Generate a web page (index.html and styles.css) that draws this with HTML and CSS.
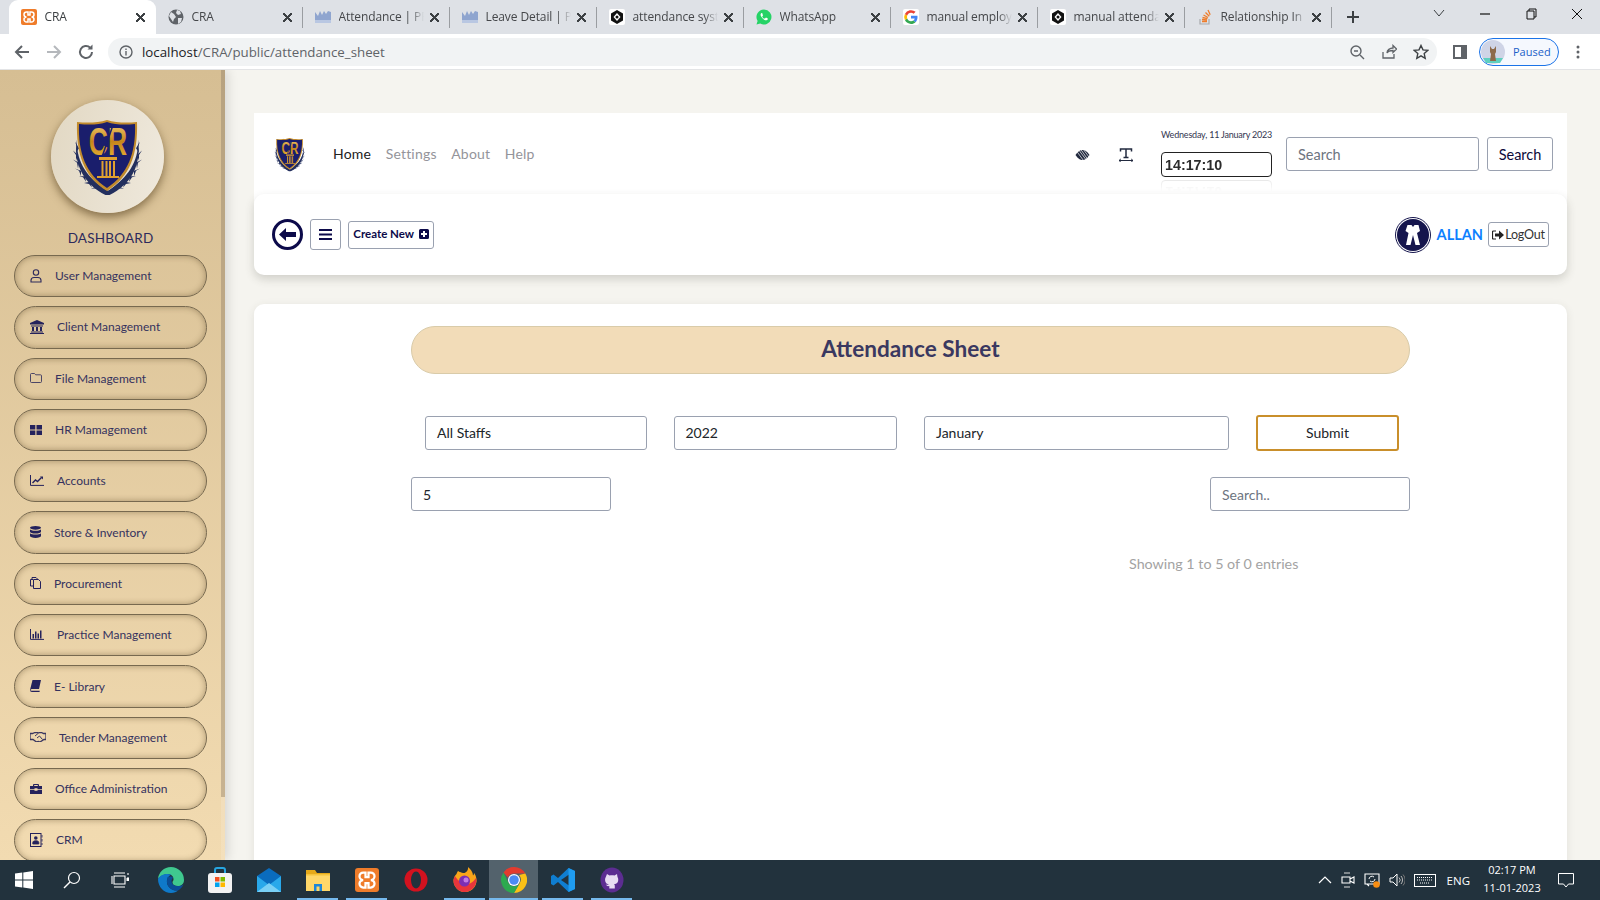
FILE: index.html
```html
<!DOCTYPE html>
<html lang="en">
<head>
<meta charset="utf-8">
<title>CRA</title>
<link rel="stylesheet" href="styles.css">
</head>
<body>
<svg class="defs" width="0" height="0" aria-hidden="true">
  <defs>
    <linearGradient id="gold" x1="0" y1="0" x2="0" y2="1"><stop offset="0" stop-color="#f8d77a"/><stop offset=".5" stop-color="#c5861b"/><stop offset="1" stop-color="#efb83c"/></linearGradient>
    <symbol id="crest" viewBox="0 0 72 76">
      <g fill="#232f5e" transform="translate(0 -1) scale(1 1.120)">
        <path d="M3 21l2 5-1 5 3-4zM1 29l3 4 0 5 2-5zM1 37l4 3 1 5 1-5zM3 45l4 2 2 5 0-5zM7 52l4 1 3 4-1-5zM12 58l5 1 3 3-2-5zM19 63l6 0 4 3-3-5zM2 24l3 5M2 32l3 5"/>
        <path d="M68 21l-2 5 1 5-3-4zM70 29l-3 4 0 5-2-5zM70 37l-4 3-1 5-1-5zM68 45l-4 2-2 5 0-5zM64 52l-4 1-3 4 1-5zM59 58l-5 1-3 3 2-5zM52 63l-6 0-4 3 3-5z"/>
        <path d="M5 19c-4 18 4 39 29 50h3C63 58 69 38 66 19c1 18-8 33-30 46C14 53 4 38 5 19z"/>
      </g>
      <path d="M5 3c9 1 21 1 30-2 9 3 21 3 30 2 1 32-7 55-30 69C12 58 4 35 5 3z" fill="#c18a2c"/>
      <path d="M7 5c9 1 20 1 28-2 8 3 19 3 28 2 1 29-7 50-28 64C14 55 6 34 7 5z" fill="#1a1e6c"/>
      <text class="crest-text" transform="translate(36 36) scale(.68 1)" text-anchor="middle" fill="url(#gold)">CR</text>
      <path d="M41 6L30 38" stroke="#1a1e6c" stroke-width="1.500"/>
      <path d="M27 38h18v3H27zM29.500 42h2v15h-2zM33.500 42h2v15h-2zM37 42h2v15h-2zM41 42h2v15h-2zM25 57h22v2H25z" fill="#e0a02f"/>
    </symbol>
    <symbol id="fav-xampp" viewBox="0 0 16 16"><rect width="16" height="16" rx="2" fill="#ef7c2a"/><path d="M5.500 3H7v3h2V3h1.500a2.500 2.500 0 0 1 0 5 2.500 2.500 0 0 1 0 5H9v-3H7v3H5.500a2.500 2.500 0 0 1 0-5 2.500 2.500 0 0 1 0-5z" fill="none" stroke="#fff" stroke-width="1.500"/></symbol>
    <symbol id="fav-globe" viewBox="0 0 16 16"><circle cx="8" cy="8" r="7.500" fill="#5f6368"/><path d="M3 3l3 2 2 3-2 2-1 3-2-3-2-3zM9 1l3 1 1 3-3 1-2-2zM10 9l4 0-1 4-3 2z" fill="#dee1e6"/></symbol>
    <symbol id="fav-chart" viewBox="0 0 16 16"><path d="M0 13V3l3 4 2-5 2 4 2-4 2 3 2-3 3 1v10z" fill="#8fa5cf"/><path d="M0 11h16v3H0z" fill="#b9c7e2"/></symbol>
    <symbol id="fav-hex" viewBox="0 0 16 16"><rect width="16" height="16" rx="2" fill="#fff"/><path d="M8 1l6 3.500v7L8 15l-6-3.500v-7z" fill="#111"/><path d="M8 4l3.500 4L8 12 4.500 8z" fill="#fff"/><circle cx="8" cy="8" r="1.500" fill="#111"/></symbol>
    <symbol id="fav-wa" viewBox="0 0 16 16"><path d="M8 .5a7.500 7.500 0 0 0-6.400 11.400L.5 15.500l3.700-1A7.500 7.500 0 1 0 8 .5z" fill="#25d366"/><path d="M5.500 4c-1 .5-1.500 2 0 4s3.500 3.500 5 3.300c1-.2 1.500-1 1.300-1.800l-1.800-1-1 .9C8 10 6.500 8.500 6.200 7.400l.8-1L6.200 4z" fill="#fff"/></symbol>
    <symbol id="fav-google" viewBox="0 0 16 16"><rect width="16" height="16" rx="2" fill="#fff"/><path d="M14.500 8.200c0-.5 0-1-.1-1.400H8v2.700h3.700a3 3 0 0 1-1.400 2l2.200 1.700c1.300-1.200 2-3 2-5z" fill="#4285f4"/><path d="M8 15c1.900 0 3.400-.6 4.500-1.800l-2.200-1.700c-.6.400-1.400.7-2.300.7-1.800 0-3.300-1.200-3.800-2.800L1.900 11.100A7 7 0 0 0 8 15z" fill="#34a853"/><path d="M4.200 9.400a4.200 4.200 0 0 1 0-2.800L1.900 4.900a7 7 0 0 0 0 6.200z" fill="#fbbc05"/><path d="M8 3.800c1 0 1.900.3 2.600 1l2-2A7 7 0 0 0 1.900 4.900l2.300 1.700C4.700 5 6.200 3.800 8 3.800z" fill="#ea4335"/></symbol>
    <symbol id="fav-so" viewBox="0 0 16 16"><path d="M3 10v5h9v-5" fill="none" stroke="#a7a9ac" stroke-width="1.200"/><path d="M5 12.500h5M5 10.500l5 .5M5.500 8.500l5 1.200M6.500 6l4.500 2.500M8.500 3.500l3.800 3.800M11 1l2.200 4.800" stroke="#ef7c2a" stroke-width="1.300" fill="none"/></symbol>
  </defs>
</svg>

<div class="app">
  <header class="chrome">
    <div class="tabstrip">
      <div class="tab tab-active"><svg class="fav"><use href="#fav-xampp"/></svg><span class="tab-title">CRA</span><span class="tab-x"></span></div>
      <div class="tab tab-nosep"><svg class="fav"><use href="#fav-globe"/></svg><span class="tab-title">CRA</span><span class="tab-x"></span></div>
      <div class="tab"><svg class="fav"><use href="#fav-chart"/></svg><span class="tab-title">Attendance | PRA</span><span class="tab-x"></span></div>
      <div class="tab"><svg class="fav"><use href="#fav-chart"/></svg><span class="tab-title">Leave Detail | PRA</span><span class="tab-x"></span></div>
      <div class="tab"><svg class="fav"><use href="#fav-hex"/></svg><span class="tab-title">attendance system</span><span class="tab-x"></span></div>
      <div class="tab"><svg class="fav"><use href="#fav-wa"/></svg><span class="tab-title">WhatsApp</span><span class="tab-x"></span></div>
      <div class="tab"><svg class="fav"><use href="#fav-google"/></svg><span class="tab-title">manual employee</span><span class="tab-x"></span></div>
      <div class="tab"><svg class="fav"><use href="#fav-hex"/></svg><span class="tab-title">manual attendance</span><span class="tab-x"></span></div>
      <div class="tab"><svg class="fav"><use href="#fav-so"/></svg><span class="tab-title">Relationship In Laravel</span><span class="tab-x"></span></div>
      <svg class="new-tab" width="14" height="14" viewBox="0 0 14 14"><path d="M7 1v12M1 7h12" stroke="#3c4043" stroke-width="2"/></svg>
      <div class="win-ctrls">
        <svg width="46" height="16" viewBox="0 0 46 16"><path d="M18 4l5 6 5-6" fill="none" stroke="#3c4043"/></svg>
        <svg width="46" height="16" viewBox="0 0 46 16"><path d="M18 8h10" stroke="#111" stroke-width="1.200"/></svg>
        <svg width="46" height="16" viewBox="0 0 46 16"><path d="M19 5h7v8h-7zM21 5V3h7v8h-2" fill="none" stroke="#111"/></svg>
        <svg width="46" height="16" viewBox="0 0 46 16"><path d="M18 3l10 10M28 3L18 13" stroke="#111"/></svg>
      </div>
    </div>
    <div class="toolbar">
      <svg class="tb-nav" width="18" height="18" viewBox="0 0 18 18"><path d="M16 9H3M9 3L3 9l6 6" fill="none" stroke="#5f6368" stroke-width="2"/></svg>
      <svg class="tb-nav" width="18" height="18" viewBox="0 0 18 18"><path d="M2 9h13M9 3l6 6-6 6" fill="none" stroke="#b5b8bc" stroke-width="2"/></svg>
      <svg class="tb-nav" width="18" height="18" viewBox="0 0 18 18"><path d="M15 9a6 6 0 1 1-1.800-4.300" fill="none" stroke="#5f6368" stroke-width="2"/><path d="M15.500 1.500v5h-5z" fill="#5f6368"/></svg>
      <div class="omnibox">
        <svg width="14" height="14" viewBox="0 0 14 14"><circle cx="7" cy="7" r="6" fill="none" stroke="#5f6368" stroke-width="1.400"/><path d="M7 6v4.500M7 3.500v1.500" stroke="#5f6368" stroke-width="1.400"/></svg>
        <span class="url"><span class="url-host">localhost</span>/CRA/public/attendance_sheet</span>
        <div class="omni-icons">
          <svg width="16" height="16" viewBox="0 0 16 16"><circle cx="7" cy="7" r="5" fill="none" stroke="#5f6368" stroke-width="1.400"/><path d="M11 11l4 4M5 7h4" stroke="#5f6368" stroke-width="1.400"/></svg>
          <svg width="16" height="16" viewBox="0 0 16 16"><path d="M2 8v6h11v-4M6 9c0-3 3-5 6-5V1.500L15.500 5 12 8.500V6.500C9 6.500 7 7 6 9z" fill="none" stroke="#5f6368" stroke-width="1.300"/></svg>
          <svg width="16" height="16" viewBox="0 0 16 16"><path d="M8 1.500l2 4.400 4.700.5-3.500 3.200 1 4.700L8 11.900l-4.200 2.400 1-4.700L1.300 6.400 6 5.900z" fill="none" stroke="#3c4043" stroke-width="1.400"/></svg>
        </div>
      </div>
      <svg class="side-panel" width="14" height="14" viewBox="0 0 14 14"><rect x="1" y="1" width="12" height="12" fill="none" stroke="#5f6368" stroke-width="2"/><rect x="8" y="1" width="5" height="12" fill="#5f6368"/></svg>
      <div class="profile">
        <svg class="profile-pic" width="24" height="24" viewBox="0 0 24 24"><circle cx="12" cy="12" r="12" fill="#cfd4e6"/><path d="M2 18h20l-3 5H5z" fill="#5ecfc0"/><path d="M9 6l2 3h2l2-3v6l-1 2 1 7H9l1-7-1-2z" fill="#8d6a4a"/></svg>
        <span>Paused</span>
      </div>
      <svg class="dots" width="4" height="14" viewBox="0 0 4 14"><circle cx="2" cy="2" r="1.500" fill="#5f6368"/><circle cx="2" cy="7" r="1.500" fill="#5f6368"/><circle cx="2" cy="12" r="1.500" fill="#5f6368"/></svg>
    </div>
  </header>

  <div class="viewport">
    <aside class="sidebar">
      <div class="side-inner">
        <div class="side-logo"><svg width="72" height="76"><use href="#crest"/></svg></div>
        <div class="side-title">DASHBOARD</div>
        <nav class="nav">
          <a class="nav-item"><svg width="12" height="14" viewBox="0 0 12 14"><circle cx="6" cy="3.500" r="2.700" fill="none" stroke="#2d2a5c" stroke-width="1.100"/><path d="M1 13v-1.500C1 9.500 2.500 8.500 4 8.500h4c1.500 0 3 1 3 3V13z" fill="none" stroke="#2d2a5c" stroke-width="1.100"/></svg><span>User Management</span></a>
          <a class="nav-item"><svg width="14" height="14" viewBox="0 0 14 14"><path d="M7 0l7 3v1.500H0V3zM1 5.500h12v1H1zM2 7h2v4H2zM6 7h2v4H6zM10 7h2v4h-2zM1 11.500h12v1H1zM0 13h14v1H0z" fill="#25225c"/></svg><span>Client Management</span></a>
          <a class="nav-item"><svg width="12" height="10" viewBox="0 0 12 10"><path d="M.5 1.500a1 1 0 0 1 1-1h3l1.200 1.300h4.800a1 1 0 0 1 1 1v5.700a1 1 0 0 1-1 1h-9a1 1 0 0 1-1-1z" fill="none" stroke="#3a3760" stroke-width=".9"/></svg><span>File Management</span></a>
          <a class="nav-item"><svg width="12" height="10" viewBox="0 0 12 10"><path d="M0 0h5.300v4.400H0zM6.500 0H12v4.400H6.500zM0 5.500h5.300V10H0zM6.500 5.500H12V10H6.500z" fill="#25225c"/></svg><span>HR Mamagement</span></a>
          <a class="nav-item"><svg width="14" height="11" viewBox="0 0 14 11"><path d="M.5 0v10.400H14" fill="none" stroke="#25225c"/><path d="M2.500 8l3-3 2 1.500 4-4" fill="none" stroke="#25225c" stroke-width="1.400"/><path d="M10 1.500h3v3z" fill="#25225c"/></svg><span>Accounts</span></a>
          <a class="nav-item"><svg width="11" height="12" viewBox="0 0 11 12"><path d="M0 1.800C0 .8 2.500 0 5.500 0S11 .8 11 1.800s-2.500 1.900-5.500 1.900S0 2.800 0 1.800zM0 3.500c1.200 1 3 1.300 5.500 1.300S9.800 4.500 11 3.500v2.200C11 6.700 8.500 7.500 5.500 7.500S0 6.700 0 5.700zM0 7.300c1.200 1 3 1.300 5.500 1.300s4.300-.3 5.500-1.300v2.800C11 11.100 8.500 12 5.500 12S0 11.100 0 10.100z" fill="#25225c"/></svg><span>Store &amp; Inventory</span></a>
          <a class="nav-item"><svg width="11" height="12" viewBox="0 0 11 12"><path d="M3 2.500H.5v6.500H3M3.500 2.500v9h7V4.500L8.500 2.500z" fill="none" stroke="#25225c"/><path d="M2 2.500V.5h4l1.500 1.500" fill="none" stroke="#25225c"/></svg><span>Procurement</span></a>
          <a class="nav-item"><svg width="14" height="11" viewBox="0 0 14 11"><path d="M.5 0v10.400H14" fill="none" stroke="#25225c"/><path d="M2.500 5h1.500v4.500H2.500zM5 2.500h1.500v7H5zM7.500 4.500H9v5H7.500zM10 1.500h1.500v8H10z" fill="#25225c"/></svg><span>Practice Management</span></a>
          <a class="nav-item"><svg width="11" height="12" viewBox="0 0 11 12"><path d="M2.500 0H11L9 9H1.500L.4 10c.2.600.8.800 1.600.800h7.800L9.500 12H2C.7 12 0 11.200 0 10z" fill="#25225c"/></svg><span>E- Library</span></a>
          <a class="nav-item"><svg width="16" height="10" viewBox="0 0 16 10"><path d="M0 1.500h2.500l2.500-1h2.500l1 .5 1-.5h2l2 1H16v6h-2l-4 2.500-1.500-.5-2 .5L3 7.500H0z" fill="none" stroke="#3a3760" stroke-width="1.300"/><path d="M5 4l3-2.500M7 6l2.500-2 3 3.500" fill="none" stroke="#3a3760"/></svg><span>Tender Management</span></a>
          <a class="nav-item"><svg width="12" height="10" viewBox="0 0 12 10"><path d="M4 0h4a1 1 0 0 1 1 1v1h3v3H7.500v-.8h-3V5H0V2h3V1a1 1 0 0 1 1-1zm.2 1v1h3.600V1zM0 5.800h4.500v1h3v-1H12V10H0z" fill="#25225c"/></svg><span>Office Administration</span></a>
          <a class="nav-item"><svg width="13" height="14" viewBox="0 0 13 14"><rect x=".5" y=".5" width="10.500" height="13" fill="none" stroke="#25225c"/><circle cx="5.800" cy="5" r="1.800" fill="#25225c"/><path d="M2.800 11V9.500c0-1 1-1.800 3-1.800s3 .8 3 1.800V11zM12 2v2.500M12 6v2.500M12 10v2" fill="#25225c" stroke="#25225c" stroke-width=".8"/></svg><span>CRM</span></a>
        </nav>
      </div>
      <div class="side-scroll"><div class="side-thumb"></div></div>
    </aside>

    <main class="page">
      <section class="topbar">
        <svg class="top-logo" width="32" height="35" viewBox="0 0 72 76"><use href="#crest"/></svg>
        <nav class="top-nav">
          <a class="top-link top-link-on">Home</a>
          <a class="top-link">Settings</a>
          <a class="top-link">About</a>
          <a class="top-link">Help</a>
        </nav>
        <div class="top-tools">
          <svg class="ico-eye" width="15" height="12" viewBox="0 0 15 12"><path d="M.5 6C3 2 5.500 1 7.500 1s4.500 1 7 5c-2.500 4-5 5-7 5s-4.500-1-7-5z" fill="#222a3f"/><path d="M3 0l9 12M5.500 0l7 10M1.500 2l7 9.500M8 0l6 8" stroke="#fff" stroke-width=".7"/></svg>
          <svg class="ico-text" width="14" height="14" viewBox="0 0 14 14"><path d="M1.500 3.500V1h11v2.500M7 1v8.500M4.500 9.500h5" fill="none" stroke="#222a3f" stroke-width="1.500"/><path d="M0 12.500h14M1.800 11l-1.800 1.500L1.800 14M12.200 11l1.800 1.500L12.200 14" fill="none" stroke="#222a3f"/></svg>
          <div class="clock-col">
            <div class="clock-date">Wednesday, 11 January 2023</div>
            <div class="clock-time">14:17:10</div>
          </div>
          <div class="field top-search">Search</div>
          <button class="btn-search">Search</button>
        </div>
      </section>

      <section class="actionbar">
        <svg class="back" width="31" height="31" viewBox="0 0 31 31"><circle cx="15.500" cy="15.500" r="14" fill="#fff" stroke="#0c0a4a" stroke-width="3"/><path d="M7 15.500L14 9v4h10v5H14v4z" fill="#0c0a4a"/></svg>
        <button class="btn-menu"><svg width="13" height="11" viewBox="0 0 13 11"><path d="M0 1h13M0 5.500h13M0 10h13" stroke="#0c0a4a" stroke-width="2"/></svg></button>
        <button class="btn-create">Create New <svg width="10" height="10" viewBox="0 0 10 10"><path d="M1.500 0h7A1.500 1.500 0 0 1 10 1.500v7A1.500 1.500 0 0 1 8.500 10h-7A1.500 1.500 0 0 1 0 8.500v-7A1.500 1.500 0 0 1 1.500 0zM4 2v2H2v2h2v2h2V6h2V4H6V2z" fill="#0c0a4a" fill-rule="evenodd"/></svg></button>
        <div class="user">
          <svg class="avatar" width="36" height="36" viewBox="0 0 36 36"><circle cx="18" cy="18" r="17.500" fill="#fff" stroke="#15154d"/><circle cx="18" cy="18" r="16" fill="#15154d"/><path d="M12.500 8h4l1.500 2 1.500-2h4l1.500 6-3 2L25 28h-4.500L18 18l-2.500 10H11l2.500-12-3-2z" fill="#fff"/></svg>
          <span class="user-name">ALLAN</span>
          <button class="btn-logout"><svg width="12" height="10" viewBox="0 0 12 10"><path d="M4 1H1.500a1 1 0 0 0-1 1v6a1 1 0 0 0 1 1H4" fill="none" stroke="#222" stroke-width="1.200"/><path d="M3 3.500h4V.5L12 5 7 9.500v-3H3z" fill="#222"/></svg>LogOut</button>
        </div>
      </section>

      <section class="sheet">
        <div class="sheet-inner">
          <h1 class="sheet-title">Attendance Sheet</h1>
          <div class="filters">
            <div class="field">All Staffs</div>
            <div class="field">2022</div>
            <div class="field">January</div>
            <button class="btn-submit">Submit</button>
          </div>
          <div class="table-tools">
            <div class="field field-len">5</div>
            <div class="field field-find">Search..</div>
          </div>
          <p class="entries">Showing 1 to 5 of 0 entries</p>
        </div>
      </section>
    </main>
  </div>

  <footer class="taskbar">
    <div class="tb-sys">
      <svg width="18" height="18" viewBox="0 0 18 18"><path d="M0 2.600L7.300 1.500v7H0zM8.300 1.400L18 0v8.500H8.300zM0 9.500h7.300v7L0 15.400zM8.300 9.500H18V18L8.300 16.600z" fill="#fff"/></svg>
    </div>
    <div class="tb-sys">
      <svg width="18" height="18" viewBox="0 0 18 18"><circle cx="11" cy="7" r="5.500" fill="none" stroke="#fff" stroke-width="1.200"/><path d="M7 11l-6 6" stroke="#fff" stroke-width="1.400"/></svg>
    </div>
    <div class="tb-sys">
      <svg width="18" height="16" viewBox="0 0 18 16"><path d="M3 4h11v8H3zM3 1h11M3 15h11M1 4v8M17 1v2M17 5v2" fill="none" stroke="#fff" stroke-width="1.100"/><rect x="15.500" y="6" width="3" height="3" fill="#fff"/></svg>
    </div>
    <div class="tb-app">
      <svg width="26" height="26" viewBox="0 0 26 26"><path d="M13 0a13 13 0 0 1 13 13c0 4-3 6-6 6-3.500 0-5.500-1.500-5.500-3.500 0-1 .5-1.500 1-2.500C16 9 12.500 6.500 9 7 5 7.500 1 10 0 12 .5 5.500 6 0 13 0z" fill="#3fc88f"/><path d="M0 12C0 20 6 26 13 26c3 0 5.500-1 7-2.500C14.500 24 9.500 20.500 9 15.500 8.600 12 10.500 9 13.500 7.600 8 6 2 8 0 12z" fill="#0f79c9"/><path d="M9 15.500c.5 5 5.500 8.500 11 8 2-1 4.500-3.500 5.500-6-2 1.500-3.500 1.500-5.500 1.500-4 0-6.500-2-6.500-5 0-1.500 1-2.500 1.500-3.500-1-1-3-1.500-5.500-.5C9.500 11 8.800 13.500 9 15.500z" fill="#0a4d96"/></svg>
    </div>
    <div class="tb-app">
      <svg width="24" height="26" viewBox="0 0 24 26"><path d="M7 6V3a2 2 0 0 1 2-2h6a2 2 0 0 1 2 2v3" fill="none" stroke="#27a5e0" stroke-width="2"/><rect y="6" width="24" height="20" rx="3" fill="#f2f2f2"/><path d="M7 10h4.500v4.500H7z" fill="#f25022"/><path d="M12.500 10H17v4.500h-4.500z" fill="#7fba00"/><path d="M7 15.500h4.500V20H7z" fill="#00a4ef"/><path d="M12.500 15.500H17V20h-4.500z" fill="#ffb900"/></svg>
    </div>
    <div class="tb-app">
      <svg width="24" height="24" viewBox="0 0 24 24"><path d="M0 8L12 0l12 8v16H0z" fill="#0a6cbe"/><path d="M0 8l12 9 12-9v16H0z" fill="#29a8ea"/><path d="M0 24l12-9 12 9z" fill="#7ad0f5"/></svg>
    </div>
    <div class="tb-app">
      <svg width="24" height="22" viewBox="0 0 24 22"><path d="M0 1h9l2 3h13v18H0z" fill="#e6a919"/><path d="M0 6h24v16H0z" fill="#ffd769"/><path d="M8 22v-7h8v7h-2.500v-4.500h-3V22z" fill="#1d87d9"/><rect x="0" y="5" width="24" height="1.500" fill="#f5c33b"/></svg>
    </div>
    <div class="tb-app">
      <svg width="24" height="24" viewBox="0 0 16 16"><use href="#fav-xampp"/></svg>
    </div>
    <div class="tb-app">
      <svg width="24" height="24" viewBox="0 0 24 24"><circle cx="12" cy="12" r="11.500" fill="#d3121f"/><ellipse cx="12" cy="12" rx="5" ry="8.500" fill="#22323d"/></svg>
    </div>
    <div class="tb-app">
      <svg width="24" height="26" viewBox="0 0 24 26"><path d="M12 25a11.500 11.500 0 0 0 11-15c-.5-2-1.500-3.500-2-4 0 1-.3 2-1 2.500C20 5 17.500 2 15 0c.5 3-1.500 5-3.500 6C8 6 5 4 5 4 4 5 3.500 7 3.500 7 1.500 9 .5 11.500.5 13.500A11.500 11.500 0 0 0 12 25z" fill="#f9a51a"/><path d="M12 25A11.500 11.500 0 0 1 .5 13.500c0-1 .5-3 1.500-4.500 2 4 12 15 21 2A11.500 11.500 0 0 1 12 25z" fill="#e8353c"/><circle cx="11.500" cy="14" r="5.500" fill="#7b2fb5"/><circle cx="13" cy="13" r="2.500" fill="#c27ae6"/></svg>
    </div>
    <div class="tb-app tb-active">
      <svg width="26" height="26" viewBox="0 0 26 26"><path d="M13 0a13 13 0 0 1 11.300 6.500H13A6.500 6.500 0 0 0 7 10.500L2.500 5.500A13 13 0 0 1 13 0z" fill="#e33b2e"/><path d="M24.300 6.500A13 13 0 0 1 13 26l5.600-9.800A6.500 6.500 0 0 0 18 8z" fill="#fbc116"/><path d="M2.500 5.500A13 13 0 0 0 13 26l5.600-9.800a6.500 6.500 0 0 1-11.400-.7z" fill="#2da94f"/><circle cx="13" cy="13" r="6" fill="#fff"/><circle cx="13" cy="13" r="4.800" fill="#4a8af4"/></svg>
    </div>
    <div class="tb-app">
      <svg width="24" height="24" viewBox="0 0 24 24"><path d="M17.500 0L24 3v18l-6.500 3L7 14l-4.500 3.500L0 16V8l2.500-1.500L7 10z" fill="#0f7ed1"/><path d="M18 6.500L10 12l8 5.500z" fill="#22323d"/><path d="M17.500 0L24 3v18l-6.500 3z" fill="#1f9cf0"/></svg>
    </div>
    <div class="tb-app">
      <svg width="24" height="26" viewBox="0 0 24 26"><ellipse cx="12" cy="13" rx="11.500" ry="12.500" fill="#5c2d91"/><path d="M7 7l2.500 1.500c1.500-.4 3.500-.4 5 0L17 7l.5 3c1 1.500 1 4 0 5.500-1 1-2 1.500-3.500 1.500.6.500.8 1 .8 2v2.500h-5.500V19c-2 .5-3-.5-3.500-1.500 1 .5 2 .5 3-.5-1.500 0-2.500-.5-3-1.500-1-1.500-1-4 0-5.500z" fill="#e9ddf3"/></svg>
    </div>
    <div class="tray">
      <svg width="14" height="8" viewBox="0 0 14 8"><path d="M1 7l6-6 6 6" fill="none" stroke="#fff" stroke-width="1.200"/></svg>
      <svg width="14" height="16" viewBox="0 0 14 16"><path d="M3 1h6M3 15h6" stroke="#ddd"/><path d="M1 5h8v6H1zM9 7l4-2v6l-4-2" fill="none" stroke="#fff" stroke-width="1.100"/></svg>
      <svg width="16" height="16" viewBox="0 0 16 16"><path d="M1 2h14v10H1zM3 12l2 2" fill="none" stroke="#fff" stroke-width="1.100"/><path d="M5 7a3 3 0 0 1 5-2M11 7a3 3 0 0 1-5 2" fill="none" stroke="#fff"/><circle cx="12.500" cy="12.500" r="3.300" fill="#f78d13"/></svg>
      <svg width="16" height="14" viewBox="0 0 16 14"><path d="M1 5h3l4-4v12L4 9H1z" fill="none" stroke="#fff"/><path d="M10 4.500a3.500 3.500 0 0 1 0 5M12 3a6 6 0 0 1 0 8" fill="none" stroke="#bbb"/><path d="M14 1.500a8 8 0 0 1 0 11" fill="none" stroke="#777"/></svg>
      <svg width="22" height="13" viewBox="0 0 22 13"><rect x=".5" y=".5" width="21" height="12" fill="none" stroke="#fff"/><path d="M3 3.500h16M3 6h16M6 9h10" stroke="#fff" stroke-dasharray="1 1"/></svg>
      <span class="tray-lang">ENG</span>
      <div class="tray-clock"><span>02:17 PM</span><span>11-01-2023</span></div>
      <svg class="tray-note" width="16" height="15" viewBox="0 0 16 15"><path d="M.5.500h15v10.500h-5L8 14l-2.500-3H.5z" fill="none" stroke="#fff"/></svg>
    </div>
  </footer>
</div>
</body>
</html>
```

FILE: styles.css
```css
* { box-sizing: border-box; }
html, body { margin: 0; height: 100%; overflow: hidden; }
body { font-family: "Lato", "Noto Sans", sans-serif; }
button { font-family: inherit; cursor: pointer; }
.defs { display: block; height: 0; }
.crest-text { font-family: "Liberation Sans", sans-serif; font-weight: 700; font-size: 39px; }

.app { display: flex; flex-direction: column; height: 900px; width: 1600px; }

/* Browser chrome */
.chrome { flex: none; font-family: "Open Sans", sans-serif; }
.tabstrip { height: 34px; background: #dee1e6; display: flex; align-items: stretch; padding-left: 8.500px; }
.tab { width: 147px; position: relative; display: flex; align-items: center; padding: 0 10px 0 12px; color: #45474a; font-size: 12px; }
.tab::after { content: ""; position: absolute; right: 0; top: 7px; bottom: 6px; width: 1px; background: #9a9da1; }
.tab-nosep { }
.tab-active { background: #fff; border-radius: 9px 9px 0 0; color: #3c4043; }
.tab-active::after { display: none; }
.fav { width: 16px; height: 16px; flex: none; margin-right: 8px; }
.tab-title { flex: 1; min-width: 0; white-space: nowrap; overflow: hidden; line-height: 16px; margin-top: -1px; -webkit-mask-image: linear-gradient(to right, #000 84%, transparent 100%); mask-image: linear-gradient(to right, #000 84%, transparent 100%); letter-spacing: -.1px; }
.tab-x { flex: none; width: 9px; height: 9px; margin-left: 6px; margin-right: 1px; background:
  linear-gradient(45deg, transparent 43%, #3c4043 43%, #3c4043 57%, transparent 57%),
  linear-gradient(-45deg, transparent 43%, #3c4043 43%, #3c4043 57%, transparent 57%); }
.new-tab { align-self: center; margin-left: 14px; }
.win-ctrls { margin-left: auto; display: flex; align-items: flex-start; padding-top: 6px; }
.win-ctrls svg:first-child { margin-right: 0; }

.toolbar { height: 36px; background: #fff; display: flex; align-items: center; padding: 0 0 0 13px; border-bottom: 1px solid #e3e4e6; }
.tb-nav { margin-right: 14px; flex: none; }
.omnibox { width: 1329px; height: 28px; margin-left: -1px; border-radius: 14px; background: #f1f3f4; display: flex; align-items: center; padding: 0 8px 0 11px; flex: none; }
.url { margin-left: 9px; font-size: 13.300px; color: #5f6368; }
.url-host { color: #202124; }
.omni-icons { margin-left: auto; display: flex; gap: 16px; }
.side-panel { margin-left: 16px; flex: none; }
.profile { margin-left: 12px; width: 80px; height: 28px; border: 1px solid #1a73e8; border-radius: 14px; background: #f5f8fe; display: flex; align-items: center; padding-left: 1px; gap: 8px; color: #1a5fc8; font-size: 11px; flex: none; }
.profile-pic { flex: none; }
.dots { margin-left: 17px; flex: none; }

/* Page viewport */
.viewport { flex: 1; min-height: 0; display: flex; background: #f5f4ef; overflow: hidden; }
.sidebar { flex: none; width: 225px; display: flex; background: linear-gradient(to bottom, #d6be93, #f2dbb1); box-shadow: 3px 0 10px rgba(0,0,0,.12); position: relative; z-index: 2; }
.side-inner { width: 221px; padding-top: 30px; flex: none; }
.side-logo { width: 113px; height: 113px; margin-left: 51px; border-radius: 50%; background: linear-gradient(100deg, #e2d8c3, #efe9dd); box-shadow: 0 4px 10px rgba(60,40,10,.55); display: flex; align-items: center; justify-content: center; }
.side-title { margin-top: 14px; height: 22px; line-height: 22px; text-align: center; font-size: 13.500px; color: #2d2a5c; letter-spacing: .2px; }
.nav { display: flex; flex-direction: column; gap: 9px; margin: 6px 0 0 14px; width: 193px; }
.nav-item { height: 42.300px; flex: none; display: flex; align-items: center; gap: 13.500px; padding-left: 14.500px; border: 1px solid #77694f; border-radius: 22px; box-shadow: inset 0 0 6px rgba(70,50,20,.4); color: #35325e; font-size: 12px; font-weight: 400; white-space: nowrap; padding-bottom: 1px; }
.nav-item svg { flex: none; }
.side-scroll { flex: none; width: 4px; background: rgba(255,255,255,.15); }
.side-thumb { height: 727px; background: rgba(90,70,40,.28); }

.page { flex: 1; min-width: 0; padding: 43px 33px 0 29px; color: #212529; }
.topbar { height: 90px; background: #fff; display: flex; align-items: flex-start; padding: 24px 14px 0 20px; margin-bottom: -9px; }
.top-logo { flex: none; }
.top-nav { display: flex; gap: 14.500px; margin-left: 27px; padding-top: 7px; }
.top-link { font-size: 14px; line-height: 20px; letter-spacing: .2px; color: #94949a; }
.top-link-on { color: #222; }
.top-tools { margin-left: auto; display: flex; align-items: flex-start; margin-top: -24px; }
.ico-eye { margin-top: 36px; }
.ico-text { margin: 35px 0 0 29px; }
.clock-col { width: 111px; margin-left: 28px; padding-top: 16px; }
.clock-date { font-size: 9px; line-height: 12px; letter-spacing: -.2px; white-space: nowrap; color: #333650; }
.clock-time { margin-top: 11px; height: 25px; border: 1px solid #222; border-radius: 4px; padding-left: 3px; line-height: 24px; font-family: "Liberation Sans", sans-serif; font-weight: 700; font-size: 14.300px; color: #2c2c2c; -webkit-box-reflect: below 3px linear-gradient(transparent 55%, rgba(255,255,255,.1)); }
.field { height: 34px; border: 1px solid #9aa1b0; border-radius: 3px; background: #fff; display: flex; align-items: center; padding-left: 11px; font-size: 14px; color: #212529; white-space: nowrap; }
.top-search { width: 193px; margin: 24px 0 0 14px; color: #6d7480; font-size: 14.500px; }
.btn-search { width: 66px; height: 34px; margin: 24px 0 0 8px; border: 1px solid #9aa1b0; border-radius: 3px; background: #fff; font-size: 14.500px; color: #0c0a3a; padding: 0; }

.actionbar { position: relative; height: 81px; background: #fff; border-radius: 10px; box-shadow: 0 4px 10px rgba(60,60,50,.2); display: flex; align-items: center; padding: 0 18px; }
.back { flex: none; }
.btn-menu { width: 31px; height: 31px; margin-left: 7px; padding: 0; border: 1px solid #9aa1b0; border-radius: 3px; background: #fff; display: flex; align-items: center; justify-content: center; }
.btn-create { height: 28px; width: 86px; margin-left: 7px; padding: 0 0 2px; border: 1px solid #9aa1b0; border-radius: 3px; background: #fff; font-size: 11.500px; font-weight: 700; color: #0c0a4a; white-space: nowrap; }
.btn-create svg { vertical-align: -1px; margin-left: 2px; }
.user { margin-left: auto; display: flex; align-items: center; }
.avatar { flex: none; }
.user-name { margin-left: 6px; color: #0d7fff; font-weight: 700; font-size: 14.500px; }
.btn-logout { width: 61px; height: 25px; margin-left: 5px; padding: 0; border: 1px solid #9aa1b0; border-radius: 3px; background: #fff; font-size: 12.500px; color: #333; display: flex; align-items: center; justify-content: center; gap: 1px; letter-spacing: -.2px; white-space: nowrap; }

.sheet { margin-top: 29px; height: 700px; background: #fff; border-radius: 10px 10px 0 0; box-shadow: 0 2px 8px rgba(60,60,50,.1); padding: 22px 0 0 157px; }
.sheet-inner { width: 999px; }
.sheet-title { margin: 0; height: 48px; border: 1px solid #d9cba9; border-radius: 24px; background: #f2dcb8; text-align: center; font-size: 22.600px; line-height: 43px; font-weight: 700; color: #3a3860; }
.filters { display: grid; grid-template-columns: 221.500px 223.500px 305px 143px; column-gap: 27px; align-items: center; margin: 41px 0 0 14px; height: 36px; }
.filters .field { padding-bottom: 1px; }
.btn-submit { height: 36px; border: 2px solid #c98f2b; border-radius: 3px; background: #fff; font-size: 14px; color: #212529; padding: 0 0 1px; }
.table-tools { display: flex; justify-content: space-between; margin-top: 26px; }
.field-len { width: 200px; }
.field-find { width: 200px; color: #6d7480; }
.entries { margin: 44px 0 0 718px; font-size: 14.300px; line-height: 18px; color: #a3a3a3; white-space: nowrap; }

/* Taskbar */
.taskbar { flex: none; height: 40px; background: #22323d; display: flex; align-items: center; font-family: "Open Sans", sans-serif; color: #fff; }
.tb-sys { width: 48px; height: 40px; flex: none; display: flex; align-items: center; justify-content: center; }
.tb-app { width: 49px; height: 40px; flex: none; display: flex; align-items: center; justify-content: center; position: relative; }
.tb-sys + .tb-app { margin-left: 2px; }
.tb-active { background: #53626c; }
.tb-app:nth-child(7)::after, .tb-app:nth-child(8)::after, .tb-app:nth-child(10)::after, .tb-app:nth-child(11)::after, .tb-app:nth-child(12)::after, .tb-app:nth-child(13)::after { content: ""; position: absolute; left: 4px; right: 4px; bottom: 0; height: 2px; background: #76b9ed; }
.tb-active::after { left: 0 !important; right: 0 !important; }
.tray { margin-left: auto; display: flex; align-items: center; padding-right: 26px; }
.tray svg { flex: none; margin-right: 9px; }
.tray-lang { font-size: 11.500px; margin: 0 4px 0 2px; }
.tray-clock { width: 76px; display: flex; flex-direction: column; align-items: center; font-size: 11px; line-height: 18px; margin: -2px 8px 0 0; }
.tray svg.tray-note { margin-right: 0; }
```
